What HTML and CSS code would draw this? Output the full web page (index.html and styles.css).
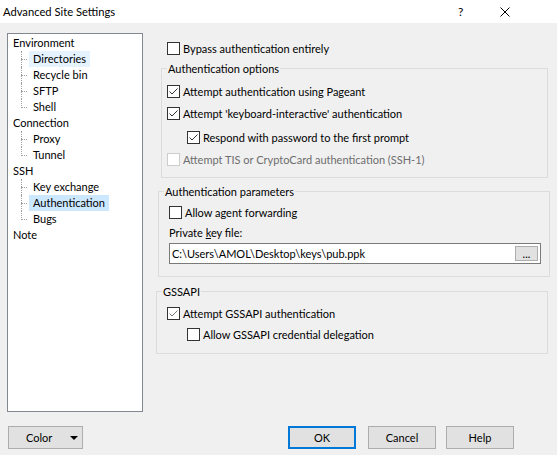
FILE: index.html
```html
<!DOCTYPE html>
<html>
<head>
<meta charset="utf-8">
<link rel="stylesheet" href="styles.css">
</head>
<body>
<div class="dialog">
  <div class="titlebar">
    <span class="title">Advanced Site Settings</span>
    <span class="help">?</span>
    <span class="close"><svg width="10" height="10" viewBox="0 0 10 10"><path d="M0.5 0.5 L9.5 9.5 M9.5 0.5 L0.5 9.5" stroke="#000" stroke-width="1" fill="none"/></svg></span>
  </div>
  <div class="main">
    <ul class="tree">
      <li class="node">Environment
        <ul class="children">
          <li class="leaf"><span class="lbl hover">Directories</span></li>
          <li class="leaf"><span class="lbl">Recycle bin</span></li>
          <li class="leaf"><span class="lbl">SFTP</span></li>
          <li class="leaf last"><span class="lbl">Shell</span></li>
        </ul>
      </li>
      <li class="node">Connection
        <ul class="children">
          <li class="leaf"><span class="lbl">Proxy</span></li>
          <li class="leaf last"><span class="lbl">Tunnel</span></li>
        </ul>
      </li>
      <li class="node">SSH
        <ul class="children">
          <li class="leaf"><span class="lbl">Key exchange</span></li>
          <li class="leaf"><span class="lbl selected">Authentication</span></li>
          <li class="leaf last"><span class="lbl">Bugs</span></li>
        </ul>
      </li>
      <li class="node">Note</li>
    </ul>
    <div class="panel">
      <div class="check bypass"><span class="box"></span><span>Bypass authentication entirely</span></div>

      <div class="group g1">
        <div class="legend">Authentication options</div>
        <div class="check r-pageant"><span class="box"><svg width="11" height="11" viewBox="0 0 11 11"><path d="M1.5 5.5 L4 8 L9.5 2.5" stroke="#333" fill="none"/></svg></span><span>Attempt authentication using Pageant</span></div>
        <div class="check r-kbd"><span class="box"><svg width="11" height="11" viewBox="0 0 11 11"><path d="M1.5 5.5 L4 8 L9.5 2.5" stroke="#333" fill="none"/></svg></span><span>Attempt 'keyboard-interactive' authentication</span></div>
        <div class="check r-respond indent"><span class="box"><svg width="11" height="11" viewBox="0 0 11 11"><path d="M1.5 5.5 L4 8 L9.5 2.5" stroke="#333" fill="none"/></svg></span><span>Respond with password to the first prompt</span></div>
        <div class="check r-tis disabled"><span class="box"></span><span>Attempt TIS or CryptoCard authentication (SSH-1)</span></div>
      </div>

      <div class="group g2">
        <div class="legend">Authentication parameters</div>
        <div class="check r-agent"><span class="box"></span><span>Allow agent forwarding</span></div>
        <div class="field-label">Private <u>k</u>ey file:</div>
        <div class="input">
          <span class="value">C:\Users\AMOL\Desktop\keys\pub.ppk</span>
          <span class="dots">...</span>
        </div>
      </div>

      <div class="group g3">
        <div class="legend">GSSAPI</div>
        <div class="check r-gss"><span class="box"><svg width="11" height="11" viewBox="0 0 11 11"><path d="M1.5 5.5 L4 8 L9.5 2.5" stroke="#7a7a7a" fill="none"/></svg></span><span>Attempt GSSAPI authentication</span></div>
        <div class="check r-deleg indent"><span class="box"></span><span>Allow GSSAPI credential delegation</span></div>
      </div>
    </div>
  </div>
  <div class="footer">
    <div class="btn color-btn"><span>Color</span><span class="arrow"></span></div>
    <div class="btn ok">OK</div>
    <div class="btn cancel">Cancel</div>
    <div class="btn help-btn">Help</div>
  </div>
</div>
</body>
</html>
```
FILE: styles.css
```css
* { box-sizing: border-box; }
html, body { margin: 0; padding: 0; }
body {
  background: #f0f0f0;
  font-family: Lato, "Noto Sans", sans-serif;
  font-size: 11px;
  color: #000;
  width: 557px;
  height: 455px;
  overflow: hidden;
}
.dialog { width: 557px; height: 455px; display: flex; flex-direction: column; }

.titlebar {
  height: 23px;
  background: #fff;
  display: flex;
  align-items: center;
  padding-left: 3px;
}
.title { font-size: 11.2px; flex: 1; }
.help { width: 10px; margin-right: 32px; font-size: 12px; }
.close { width: 10px; margin-right: 47px; display: flex; }

.main {
  display: flex;
  align-items: flex-start;
  padding-top: 10px;
  padding-left: 7px;
}

.tree {
  list-style: none;
  margin: 0;
  padding: 1px 0 0 5px;
  width: 136px;
  height: 379px;
  background: #fff;
  border: 1px solid #828790;
}
.tree li { line-height: 16px; }
.children { list-style: none; margin: 0; padding: 0; }
.leaf {
  position: relative;
  padding-left: 16px;
  height: 16px;
}
.leaf::before {
  content: "";
  position: absolute;
  left: 8px;
  top: 8px;
  width: 6px;
  border-top: 1px dotted #a0a0a0;
}
.leaf::after {
  content: "";
  position: absolute;
  left: 8px;
  top: 0;
  height: 16px;
  border-left: 1px dotted #a0a0a0;
}
.leaf.last::after { height: 9px; }
.lbl { display: inline-block; padding: 0 4px 0 4px; height: 16px; }
.lbl.hover { background: #e5f3ff; }
.lbl.selected { background: #cce8ff; }

.panel {
  margin-left: 13px;
  width: 394px;
  display: flex;
  flex-direction: column;
  padding-top: 9px;
}

.check {
  display: flex;
  align-items: center;
  height: 13px;
  line-height: 13px;
  white-space: nowrap;
}
.box {
  width: 13px;
  height: 13px;
  border: 1px solid #333;
  background: #fff;
  margin-right: 3px;
  display: flex;
  align-items: center;
  justify-content: center;
  flex: none;
}
.box svg { display: block; }
.check.disabled { color: #6d6d6d; }
.check.disabled .box { border-color: #cccccc; }
.indent { margin-left: 20px; }

.bypass { margin-left: 11px; }

.group {
  border: 1px solid #dcdcdc;
  display: flex;
  flex-direction: column;
}
.legend {
  align-self: flex-start;
  background: #f0f0f0;
  line-height: 15px;
  height: 15px;
  margin-top: -8px;
  padding: 0 1px;
}

.g1 { margin-top: 13px; margin-left: 5px; width: 387px; padding: 0 0 11px 5px; }
.g1 .legend { margin-left: 0px; }
.r-pageant { margin-top: 9px; }
.r-kbd { margin-top: 9px; }
.r-respond { margin-top: 11px; }
.r-tis { margin-top: 9px; }

.g2 { margin-top: 13px; margin-left: 2px; width: 392px; padding: 0 0 12px 10px; }
.g2 .legend { margin-left: -5px; }
.r-agent { margin-top: 7px; }
.field-label { margin-top: 6px; line-height: 15px; height: 15px; }
.field-label u { text-decoration: underline; text-underline-offset: 1px; }
.input {
  margin-top: 3px;
  width: 372px;
  height: 21px;
  background: #fff;
  border: 1px solid #7a7a7a;
  display: flex;
  align-items: center;
  padding-left: 2px;
}
.input .value { flex: 1; }
.dots {
  width: 23px;
  height: 15px;
  margin-right: 2px;
  background: #e1e1e1;
  border: 1px solid #adadad;
  font-size: 11px;
  line-height: 13px;
  text-align: center;
}

.g3 { margin-top: 14px; margin-left: 0; width: 392px; padding: 0 0 12px 10px; }
.g3 .legend { margin-left: -5px; }
.r-gss { margin-top: 8px; }
.r-deleg { margin-top: 8px; }

.footer {
  display: flex;
  margin-top: 14px;
  padding-left: 8px;
}
.btn {
  height: 23px;
  background: #e1e1e1;
  border: 1px solid #adadad;
  display: flex;
  align-items: center;
  justify-content: center;
  width: 68px;
  flex: none;
}
.color-btn { width: 75px; justify-content: space-between; padding: 0 4px 0 17px; }
.color-btn .arrow {
  width: 0;
  height: 0;
  border-left: 4px solid transparent;
  border-right: 4px solid transparent;
  border-top: 4px solid #000;
}
.ok { margin-left: 205px; border: 2px solid #0078d7; }
.cancel { margin-left: 12px; }
.help-btn { margin-left: 10px; }
```
